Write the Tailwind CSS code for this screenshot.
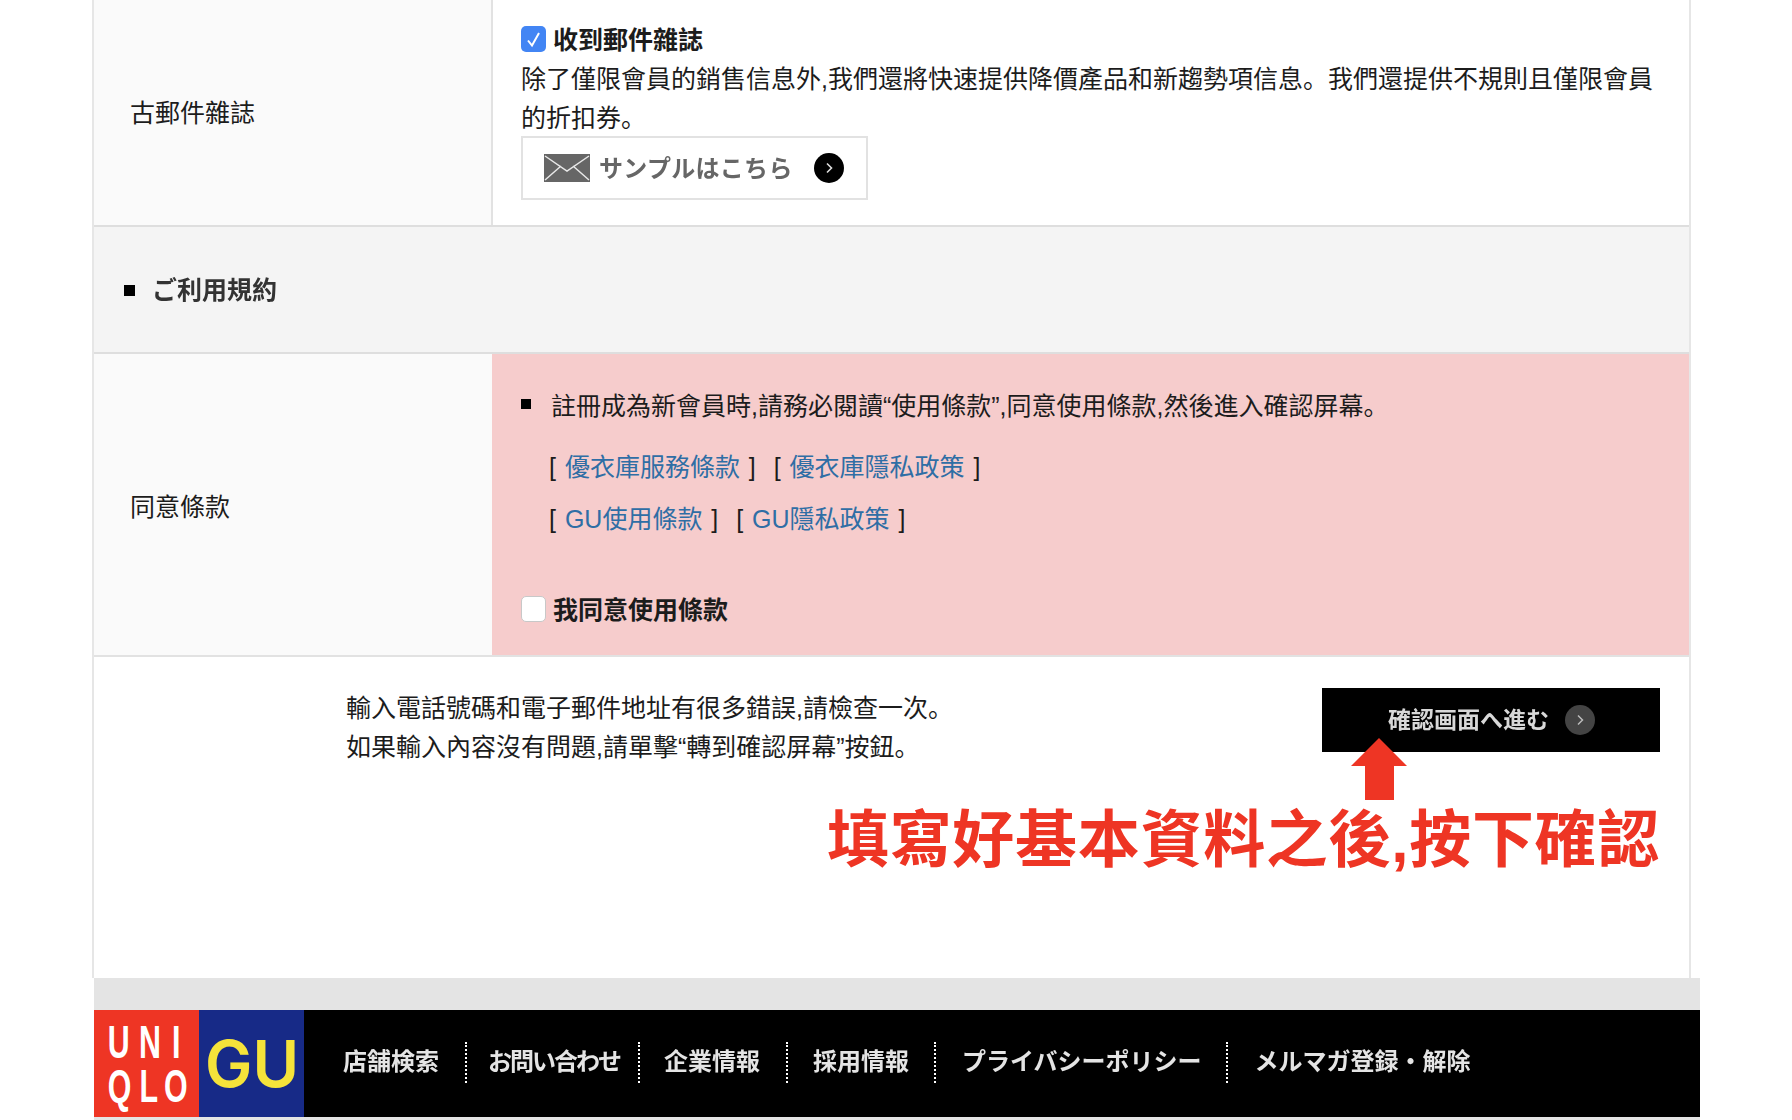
<!DOCTYPE html>
<html lang="zh-Hans">
  <head>
    <meta charset="UTF-8" />
    <meta name="viewport" content="width=device-width, initial-scale=1.0" />
    <title>會員註冊確認</title>
    <script src="https://cdn.jsdelivr.net/npm/@tailwindcss/browser@4"></script>
  </head>
  <body class="bg-white">
    <div class="w-[1792px] h-[1120px] overflow-hidden font-['Liberation_Sans','Noto_Sans_CJK_SC',sans-serif] text-[25px] leading-[39px] text-[#1c1c1c]">
      <!-- form table -->
      <div class="ml-[92px] w-[1599px] h-[978px] border-x-2 border-[#e6e6e6]">
        <!-- mail magazine row -->
        <div class="flex h-[227px] border-b-2 border-[#dedede]">
          <div class="w-[399px] shrink-0 flex items-center pl-[36px] pt-[1px] bg-[#fafafa] border-r-2 border-[#e2e2e2]">古郵件雜誌</div>
          <div class="flex-1 pl-[28px] pr-[28px] pt-[20px]">
            <div class="flex items-center h-[38px] gap-[7px]">
              <span class="w-[25px] h-[26px] rounded-[5px] bg-[#4285f4] flex items-center justify-center">
                <svg width="15" height="17" viewBox="0 0 15 17" fill="none" stroke="#fff" stroke-width="2"><path d="M2 9.5 L6 14.5 L13 2" /></svg>
              </span>
              <span class="font-bold pt-[2px]">收到郵件雜誌</span>
            </div>
            <p class="mt-[2px]">除了僅限會員的銷售信息外,我們還將快速提供降價產品和新趨勢項信息。我們還提供不規則且僅限會員的折扣券。</p>
            <div class="-mt-[2px] w-[347px] h-[64px] border-2 border-[#e2e2e2] flex items-center pl-[21px]">
              <svg width="46" height="28" viewBox="0 0 46 28" class="shrink-0">
                <rect width="46" height="28" fill="#666" />
                <path d="M1 2 L23 17 L45 2 M1 26 L17 12 M45 26 L29 12" fill="none" stroke="#e8e8e8" stroke-width="1.5" />
              </svg>
              <span class="ml-[9px] text-[24px] tracking-[0.3px] font-bold text-[#666] blur-[0.6px] whitespace-nowrap">サンプルはこちら</span>
              <span class="ml-[21px] w-[30px] h-[30px] rounded-full bg-black flex items-center justify-center">
                <svg width="10" height="12" viewBox="0 0 10 12" fill="none" stroke="#ddd" stroke-width="1.6"><path d="M3 1.5 L7.5 6 L3 10.5" /></svg>
              </span>
            </div>
          </div>
        </div>

        <!-- section heading -->
        <div class="flex items-center h-[127px] pl-[30px] pt-[1px] bg-[#f4f4f4] border-b-2 border-[#dedede]">
          <span class="w-[11px] h-[11px] bg-black"></span>
          <span class="ml-[17px] font-bold text-[#333] blur-[0.6px]">ご利用規約</span>
        </div>

        <!-- terms row -->
        <div class="flex h-[303px] border-b-2 border-[#e2e2e2]">
          <div class="w-[398px] shrink-0 flex items-center pl-[36px] pt-[5px] bg-[#fafafa]">同意條款</div>
          <div class="flex-1 bg-[#f6cccc] pl-[29px] pt-[33px]">
            <div class="flex items-center h-[39px]">
              <span class="w-[10px] h-[10px] bg-black -mt-[5px]"></span>
              <span class="ml-[20px]">註冊成為新會員時,請務必閱讀“使用條款”,同意使用條款,然後進入確認屏幕。</span>
            </div>
            <div class="pl-[28px] mt-[22px] [word-spacing:2px]">
              <p>[ <a class="text-[#2f6ea5]">優衣庫服務條款</a> ]&nbsp; [ <a class="text-[#2f6ea5]">優衣庫隱私政策</a> ]</p>
              <p class="mt-[13px]">[ <a class="text-[#2f6ea5]">GU使用條款</a> ]&nbsp; [ <a class="text-[#2f6ea5]">GU隱私政策</a> ]</p>
            </div>
            <div class="flex items-center h-[39px] gap-[7px] mt-[52px]">
              <span class="w-[25px] h-[26px] -mt-[4px] rounded-[5px] bg-white border border-[#c8c8c8]"></span>
              <span class="font-bold">我同意使用條款</span>
            </div>
          </div>
        </div>

        <!-- confirm row -->
        <div class="relative flex justify-between h-[321px] pl-[252px] pr-[29px] pt-[31px]">
          <p class="pt-[1px]">輸入電話號碼和電子郵件地址有很多錯誤,請檢查一次。<br />如果輸入內容沒有問題,請單擊“轉到確認屏幕”按鈕。</p>
          <div class="w-[338px] h-[64px] bg-black flex items-center pl-[66px]">
            <span class="text-[23px] font-bold text-[#d8d8d8] blur-[0.6px] whitespace-nowrap">確認画面へ進む</span>
            <span class="ml-[16px] w-[30px] h-[30px] rounded-full bg-[#444] flex items-center justify-center">
              <svg width="10" height="12" viewBox="0 0 10 12" fill="none" stroke="#bbb" stroke-width="1.5"><path d="M3 1.5 L7.5 6 L3 10.5" /></svg>
            </span>
          </div>
          <!-- red annotation -->
          <svg class="absolute left-[1257px] top-[81px]" width="56" height="62" viewBox="0 0 56 62"><path d="M28 0 L56 28 L43 28 L43 62 L14 62 L14 28 L0 28 Z" fill="#ee3524" /></svg>
          <div class="absolute right-[29px] top-[151px] text-[62px] leading-[66px] tracking-[0.7px] font-bold text-[#ee3524] whitespace-nowrap">填寫好基本資料之後,按下確認</div>
        </div>
      </div>

      <!-- footer -->
      <div class="ml-[94px] w-[1606px] bg-[#e4e4e4] pt-[32px] pb-[3px]">
        <div class="flex items-center h-[107px] bg-black">
          <div class="w-[105px] h-full bg-[#ee3524]">
            <svg width="105" height="107" viewBox="0 0 105 107" fill="#fff" font-family="Liberation Sans" font-weight="700" font-size="46">
              <g transform="scale(0.66 1)">
                <text y="48" x="21 68 118">UNI</text>
                <text y="92" x="21 69 106">QLO</text>
              </g>
            </svg>
          </div>
          <div class="w-[105px] h-full bg-[#172a87]">
            <svg width="105" height="107" viewBox="0 0 105 107" fill="#f5e33a" font-family="Inter" font-weight="600" font-size="64">
              <text x="6" y="77" textLength="94" lengthAdjust="spacingAndGlyphs">GU</text>
            </svg>
          </div>
          <nav class="flex items-center pb-[2px] text-[24px] font-bold text-[#e4e4e4] whitespace-nowrap">
            <a class="h-[41px] pl-[39px] pr-[26px] border-r-2 border-dotted border-white"><span class="blur-[0.6px] inline-block leading-[37px]">店舗検索</span></a>
            <a class="h-[41px] pl-[21px] pr-[18px] border-r-2 border-dotted border-white"><span class="blur-[0.6px] inline-block leading-[37px] tracking-[-2px]">お問い合わせ</span></a>
            <a class="h-[41px] pl-[24px] pr-[26px] border-r-2 border-dotted border-white"><span class="blur-[0.6px] inline-block leading-[37px]">企業情報</span></a>
            <a class="h-[41px] pl-[25px] pr-[25px] border-r-2 border-dotted border-white"><span class="blur-[0.6px] inline-block leading-[37px]">採用情報</span></a>
            <a class="h-[41px] pl-[26px] pr-[24px] border-r-2 border-dotted border-white"><span class="blur-[0.6px] inline-block leading-[37px]">プライバシーポリシー</span></a>
            <a class="h-[41px] pl-[27px]"><span class="blur-[0.6px] inline-block leading-[37px]">メルマガ登録・解除</span></a>
          </nav>
        </div>
      </div>
    </div>
  </body>
</html>
